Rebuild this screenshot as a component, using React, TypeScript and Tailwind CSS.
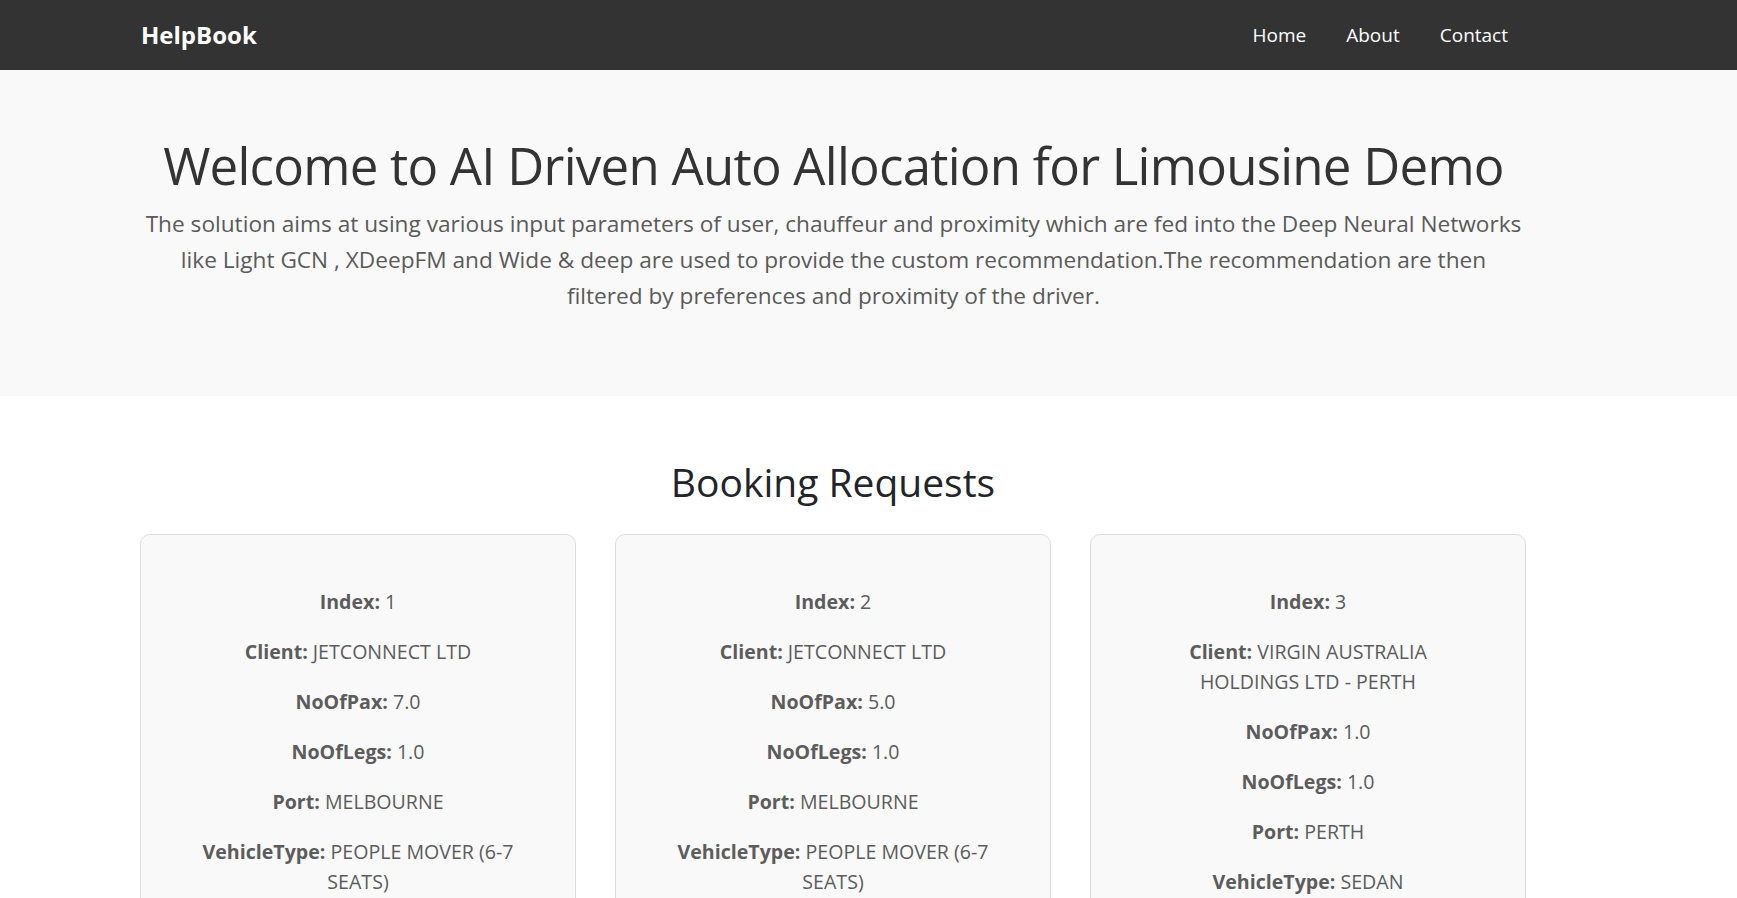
const bookings = [
  {
    index: 1,
    client: 'JETCONNECT LTD',
    pax: '7.0',
    legs: '1.0',
    port: 'MELBOURNE',
    vehicle: 'PEOPLE MOVER (6-7 SEATS)',
  },
  {
    index: 2,
    client: 'JETCONNECT LTD',
    pax: '5.0',
    legs: '1.0',
    port: 'MELBOURNE',
    vehicle: 'PEOPLE MOVER (6-7 SEATS)',
  },
  {
    index: 3,
    client: 'VIRGIN AUSTRALIA HOLDINGS LTD - PERTH',
    pax: '1.0',
    legs: '1.0',
    port: 'PERTH',
    vehicle: 'SEDAN',
  },
];

function Field({ label, value }: { label: string; value: string | number }) {
  return (
    <p className="mb-5 text-[19.6px] leading-[30px]">
      <span className="font-bold">{label}:</span> {value}
    </p>
  );
}

export default function App() {
  return (
    <div className="min-h-screen bg-white font-['Open_Sans',sans-serif]">
      <nav className="h-[70px] bg-[#333333]">
        <div className="ml-[141px] mr-[211px] flex h-full items-center justify-between">
          <a className="text-[24px] font-bold text-white" href="#">HelpBook</a>
          <ul className="mr-[18px] flex gap-10 text-[19px] text-white">
            <li><a href="#">Home</a></li>
            <li><a href="#">About</a></li>
            <li><a href="#">Contact</a></li>
          </ul>
        </div>
      </nav>

      <header className="h-[326px] bg-[#f9f9f9] pt-[64px]">
        <div className="ml-[130px] mr-[200px] text-center">
          <h1 className="whitespace-nowrap text-[51px] leading-[62px] tracking-[-0.75px] text-[#333333]">
            Welcome to AI Driven Auto Allocation for Limousine Demo
          </h1>
          <p className="mt-[10px] text-[22.65px] leading-[36px] text-[#5a5a5a]">
            The solution aims at using various input parameters of user, chauffeur and proximity which are fed into the Deep Neural Networks
            <br />
            like Light GCN , XDeepFM and Wide &amp; deep are used to provide the custom recommendation.The recommendation are then
            <br />
            filtered by preferences and proximity of the driver.
          </p>
        </div>
      </header>

      <section className="ml-[140px] mr-[211px] pt-[62px]">
        <h2 className="mb-[28px] text-center text-[39px] leading-[48px] text-[#212529]">Booking Requests</h2>
        <div className="grid grid-cols-3 gap-[39px]">
          {bookings.map((b) => (
            <div
              key={b.index}
              className="rounded-[10px] border border-[#dddddd] bg-[#f9f9f9] px-[56px] pb-8 pt-[52px] text-center text-[#5c5c5c]"
            >
              <Field label="Index" value={b.index} />
              <Field label="Client" value={b.client} />
              <Field label="NoOfPax" value={b.pax} />
              <Field label="NoOfLegs" value={b.legs} />
              <Field label="Port" value={b.port} />
              <Field label="VehicleType" value={b.vehicle} />
            </div>
          ))}
        </div>
      </section>
    </div>
  );
}
